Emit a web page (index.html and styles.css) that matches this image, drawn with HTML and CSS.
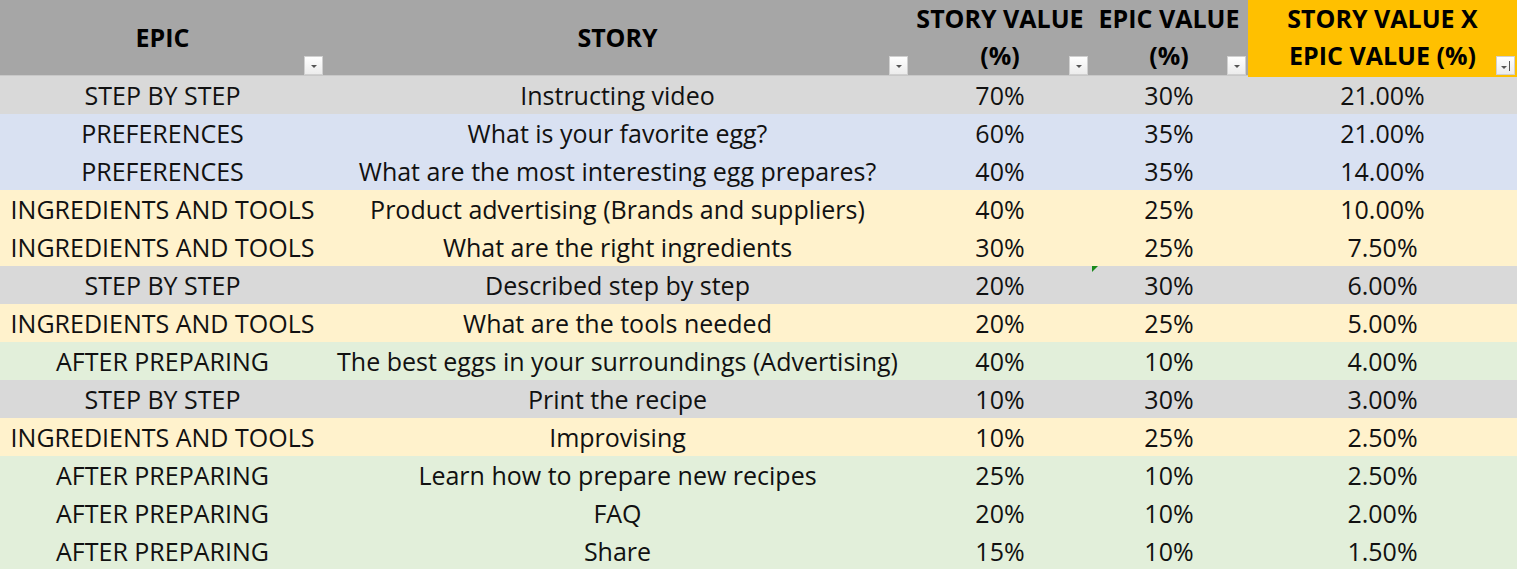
FILE: index.html
```html
<!DOCTYPE html>
<html>
<head>
<meta charset="utf-8">
<link rel="stylesheet" href="styles.css">
</head>
<body>
<div class="sheet">
  <div class="row head">
    <div class="cell hcell"><span>EPIC</span><i class="flt"></i></div>
    <div class="cell hcell"><span>STORY</span><i class="flt"></i></div>
    <div class="cell hcell two"><span>STORY VALUE<br>(%)</span><i class="flt"></i></div>
    <div class="cell hcell two"><span>EPIC VALUE<br>(%)</span><i class="flt"></i></div>
    <div class="cell hcell two gold"><span>STORY VALUE X<br>EPIC VALUE (%)</span><i class="flt sort"></i></div>
  </div>
  <div class="row gray"><div class="cell">STEP BY STEP</div><div class="cell">Instructing video</div><div class="cell">70%</div><div class="cell">30%</div><div class="cell">21.00%</div></div>
  <div class="row blue"><div class="cell">PREFERENCES</div><div class="cell">What is your favorite egg?</div><div class="cell">60%</div><div class="cell">35%</div><div class="cell">21.00%</div></div>
  <div class="row blue"><div class="cell">PREFERENCES</div><div class="cell">What are the most interesting egg prepares?</div><div class="cell">40%</div><div class="cell">35%</div><div class="cell">14.00%</div></div>
  <div class="row yellow"><div class="cell">INGREDIENTS AND TOOLS</div><div class="cell">Product advertising (Brands and suppliers)</div><div class="cell">40%</div><div class="cell">25%</div><div class="cell">10.00%</div></div>
  <div class="row yellow"><div class="cell">INGREDIENTS AND TOOLS</div><div class="cell">What are the right ingredients</div><div class="cell">30%</div><div class="cell">25%</div><div class="cell">7.50%</div></div>
  <div class="row gray"><div class="cell">STEP BY STEP</div><div class="cell">Described step by step</div><div class="cell">20%</div><div class="cell mark">30%</div><div class="cell">6.00%</div></div>
  <div class="row yellow"><div class="cell">INGREDIENTS AND TOOLS</div><div class="cell">What are the tools needed</div><div class="cell">20%</div><div class="cell">25%</div><div class="cell">5.00%</div></div>
  <div class="row green"><div class="cell">AFTER PREPARING</div><div class="cell">The best eggs in your surroundings (Advertising)</div><div class="cell">40%</div><div class="cell">10%</div><div class="cell">4.00%</div></div>
  <div class="row gray"><div class="cell">STEP BY STEP</div><div class="cell">Print the recipe</div><div class="cell">10%</div><div class="cell">30%</div><div class="cell">3.00%</div></div>
  <div class="row yellow"><div class="cell">INGREDIENTS AND TOOLS</div><div class="cell">Improvising</div><div class="cell">10%</div><div class="cell">25%</div><div class="cell">2.50%</div></div>
  <div class="row green"><div class="cell">AFTER PREPARING</div><div class="cell">Learn how to prepare new recipes</div><div class="cell">25%</div><div class="cell">10%</div><div class="cell">2.50%</div></div>
  <div class="row green"><div class="cell">AFTER PREPARING</div><div class="cell">FAQ</div><div class="cell">20%</div><div class="cell">10%</div><div class="cell">2.00%</div></div>
  <div class="row green"><div class="cell">AFTER PREPARING</div><div class="cell">Share</div><div class="cell">15%</div><div class="cell">10%</div><div class="cell">1.50%</div></div>
</div>
</body>
</html>
```

FILE: styles.css
```css
html, body {
  margin: 0;
  padding: 0;
  background: #e2efda;
}
.sheet {
  width: 1517px;
  font-family: "Open Sans", Lato, sans-serif;
  font-size: 25px;
  color: #111;
}
.row {
  display: grid;
  grid-template-columns: 325px 585px 180px 158px 269px;
  height: 38px;
}
.cell {
  position: relative;
  display: flex;
  align-items: center;
  justify-content: center;
  white-space: nowrap;
  line-height: 38px;
  padding-bottom: 3px;
  box-sizing: border-box;
}
.head {
  height: 76px;
  background: #a6a6a6;
  border-bottom: 1px solid #c8c8c8;
  box-sizing: border-box;
}
.hcell {
  font-weight: bold;
  color: #000;
  text-align: center;
}
.hcell span {
  display: block;
  line-height: 38px;
}
.two span {
  line-height: 37px;
}
.gold {
  background: #ffc000;
}
.flt {
  position: absolute;
  right: 2px;
  bottom: 2px;
  width: 19px;
  height: 19px;
  background: linear-gradient(#ffffff, #ececec);
  border: 1px solid #d0d0d0;
  box-sizing: border-box;
}
.flt::after {
  content: "";
  position: absolute;
  left: 6px;
  top: 8px;
  border-left: 3px solid transparent;
  border-right: 3px solid transparent;
  border-top: 3px solid #555;
}
.sort::after {
  left: 4px;
  top: 9px;
}
.sort::before {
  content: "";
  position: absolute;
  left: 12px;
  top: 4px;
  width: 1px;
  height: 10px;
  background: #555;
}
.gray { background: #d9d9d9; }
.blue { background: #d9e1f2; }
.yellow { background: #fff2cc; }
.green { background: #e2efda; }
.mark::before {
  content: "";
  position: absolute;
  left: 2px;
  top: 0;
  border-top: 6px solid #1a8a1a;
  border-right: 6px solid transparent;
}
```
